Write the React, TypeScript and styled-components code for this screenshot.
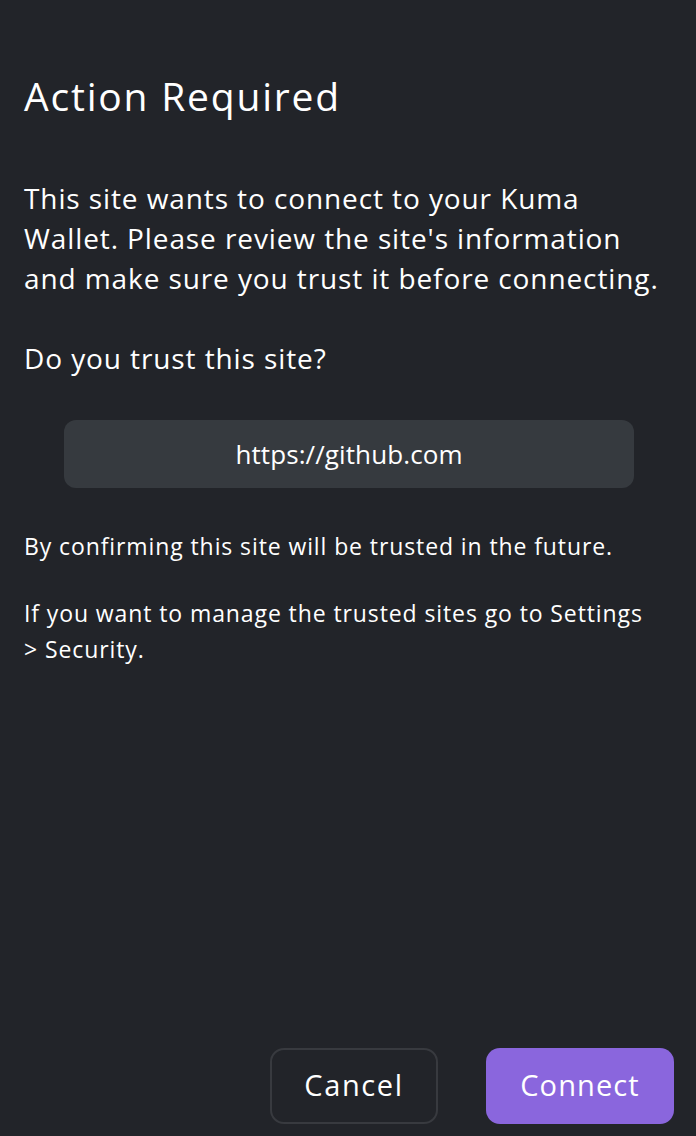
import React from "react";
import styled, { createGlobalStyle } from "styled-components";

const Global = createGlobalStyle`
  html, body { margin: 0; padding: 0; background: #222429; }
  body { font-family: "Open Sans", "Noto Sans", sans-serif; color: #ffffff; }
  * { box-sizing: border-box; }
`;

const Page = styled.div`
  width: 696px;
  height: 1136px;
  background: #222429;
  display: flex;
  flex-direction: column;
  padding: 72px 22px 12px 24px;
`;

const Content = styled.div`
  width: 640px;
  display: flex;
  flex-direction: column;
`;

const Title = styled.h1`
  margin: 0 0 58px;
  font-size: 39px;
  font-weight: 500;
  line-height: 48px;
  letter-spacing: 1.8px;
`;

const Lead = styled.p`
  margin: 0 0 40px;
  font-size: 28px;
  line-height: 40px;
  font-weight: 400;
  letter-spacing: 0.9px;
`;

const UrlBox = styled.div`
  margin: 2px 30px 0 40px;
  height: 68px;
  border-radius: 12px;
  background: #363a3f;
  display: flex;
  align-items: center;
  justify-content: center;
  font-size: 26px;
  letter-spacing: 0.1px;
`;

const Notes = styled.div`
  margin-top: 40px;
`;

const Note = styled.p`
  margin: 0 0 31px;
  font-size: 23px;
  line-height: 36px;
  letter-spacing: 0.9px;
`;

const Actions = styled.div`
  margin-top: auto;
  display: flex;
  justify-content: flex-end;
  gap: 48px;
`;

const Button = styled.button<{ $primary?: boolean }>`
  height: 76px;
  width: ${(p) => (p.$primary ? "188px" : "168px")};
  padding: 0 0 3px;
  border-radius: 14px;
  font-family: inherit;
  font-size: 29px;
  font-weight: 500;
  letter-spacing: ${(p) => (p.$primary ? "1.1px" : "1.6px")};
  color: #ffffff;
  cursor: pointer;
  background: ${(p) => (p.$primary ? "#8a66dd" : "transparent")};
  border: ${(p) => (p.$primary ? "none" : "2px solid #383a3f")};
`;

export default function App() {
  return (
    <Page>
      <Global />
      <Content>
        <Title>Action Required</Title>
        <Lead>
          This site wants to connect to your Kuma Wallet. Please review the site's information and make sure you trust it before connecting.
        </Lead>
        <Lead>Do you trust this site?</Lead>
        <UrlBox>https://github.com</UrlBox>
        <Notes>
          <Note>By confirming this site will be trusted in the future.</Note>
          <Note>If you want to manage the trusted sites go to Settings &gt;&nbsp;Security.</Note>
        </Notes>
      </Content>
      <Actions>
        <Button>Cancel</Button>
        <Button $primary>Connect</Button>
      </Actions>
    </Page>
  );
}
